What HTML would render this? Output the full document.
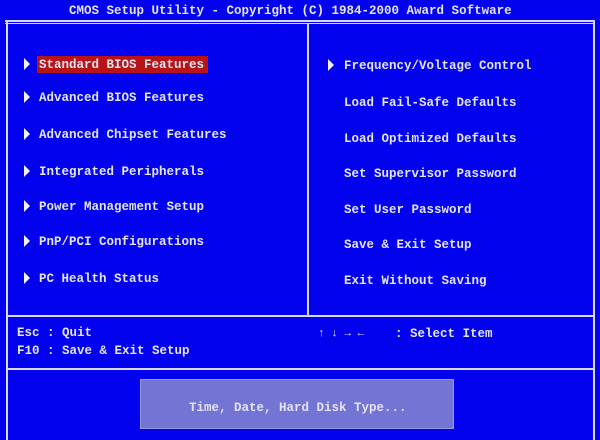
<!DOCTYPE html>
<html><head><style>
body{margin:0;width:600px;height:440px;background:#0202ee;overflow:hidden;position:relative;font-family:"Liberation Mono",monospace;font-weight:bold;font-size:12.5px;color:#e4e4f4}
.t{position:absolute;white-space:pre;line-height:14px;margin-top:1px}
.l{position:absolute;background:#d8d8f0}
.a{position:absolute;width:0;height:0;border-top:6px solid transparent;border-bottom:6px solid transparent;border-left:6px solid #f0f0ff;margin-top:-1px}
</style></head><body>
<div class="t" style="left:69px;top:3px">CMOS Setup Utility - Copyright (C) 1984-2000 Award Software</div>
<div class="l" style="left:5px;top:20px;width:590px;height:2px"></div>
<div class="l" style="left:5px;top:23px;width:590px;height:1px"></div>
<div class="l" style="left:6px;top:20px;width:2px;height:420px"></div>
<div class="l" style="left:593px;top:20px;width:2px;height:420px"></div>
<div class="l" style="left:307px;top:23px;width:2px;height:293px"></div>
<div class="l" style="left:6px;top:315px;width:589px;height:2px"></div>
<div class="l" style="left:6px;top:368px;width:589px;height:2px"></div>
<div style="position:absolute;left:37px;top:56px;width:171px;height:17px;background:#b81418"></div>
<div style="position:absolute;left:140px;top:379px;width:314px;height:50px;background:#7474d4;border:1px solid #9a9ae0;box-sizing:border-box"></div>

<div class="a" style="left:24px;top:59px"></div><div class="t" style="left:39px;top:57px">Standard BIOS Features</div>
<div class="a" style="left:24px;top:92px"></div><div class="t" style="left:39px;top:90px">Advanced BIOS Features</div>
<div class="a" style="left:24px;top:129px"></div><div class="t" style="left:39px;top:127px">Advanced Chipset Features</div>
<div class="a" style="left:24px;top:166px"></div><div class="t" style="left:39px;top:164px">Integrated Peripherals</div>
<div class="a" style="left:24px;top:201px"></div><div class="t" style="left:39px;top:199px">Power Management Setup</div>
<div class="a" style="left:24px;top:236px"></div><div class="t" style="left:39px;top:234px">PnP/PCI Configurations</div>
<div class="a" style="left:24px;top:273px"></div><div class="t" style="left:39px;top:271px">PC Health Status</div>

<div class="a" style="left:328px;top:60px"></div><div class="t" style="left:344px;top:58px">Frequency/Voltage Control</div>
<div class="t" style="left:344px;top:95px">Load Fail-Safe Defaults</div>
<div class="t" style="left:344px;top:131px">Load Optimized Defaults</div>
<div class="t" style="left:344px;top:166px">Set Supervisor Password</div>
<div class="t" style="left:344px;top:202px">Set User Password</div>
<div class="t" style="left:344px;top:237px">Save &amp; Exit Setup</div>
<div class="t" style="left:344px;top:273px">Exit Without Saving</div>

<div class="t" style="left:17px;top:325px">Esc : Quit</div>
<div class="t" style="left:17px;top:343px">F10 : Save &amp; Exit Setup</div>
<div class="t" style="left:318px;top:326px;font-size:11px">↑ ↓ → ←</div>
<div class="t" style="left:395px;top:326px">: Select Item</div>
<div class="t" style="left:189px;top:400px">Time, Date, Hard Disk Type...</div>
</body></html>
